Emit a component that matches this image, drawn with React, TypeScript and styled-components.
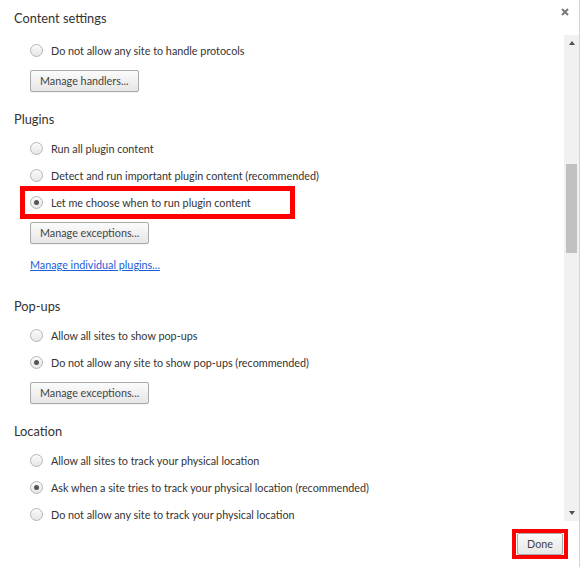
import styled, { createGlobalStyle } from 'styled-components';

const GlobalStyle = createGlobalStyle`
  html, body {
    margin: 0;
    padding: 0;
    background: #fff;
  }
  * {
    box-sizing: border-box;
  }
`;

const Dialog = styled.div`
  width: 580px;
  height: 567px;
  display: flex;
  flex-direction: column;
  background: #fff;
  border-right: 1px solid #d4d4d4;
  font-family: Lato, 'Noto Sans', sans-serif;
  color: #333;
`;

const Header = styled.div`
  height: 35px;
  display: flex;
  align-items: flex-start;
  justify-content: space-between;
  padding: 8px 9px 0 14px;
`;

const Title = styled.h1`
  margin: 0;
  font-size: 12.8px;
  font-weight: 400;
  line-height: 20px;
  color: #333;
`;

const CloseButton = styled.button`
  border: none;
  background: none;
  padding: 0;
  margin-top: -1px;
  width: 10px;
  height: 10px;
  display: flex;
  align-items: center;
  justify-content: center;
  cursor: pointer;
`;

const Body = styled.div`
  flex: 1;
  display: flex;
  min-height: 0;
`;

const Content = styled.div`
  flex: 1;
  overflow: hidden;
  padding: 2px 0 0 14px;
`;

const ScrollTrack = styled.div`
  width: 15px;
  display: flex;
  flex-direction: column;
  align-items: center;
  background: #f1f1f1;
`;

const ScrollArrow = styled.div<{ $down?: boolean }>`
  height: 16px;
  width: 15px;
  display: flex;
  align-items: center;
  justify-content: center;
  &::after {
    content: '';
    border-left: 3.5px solid transparent;
    border-right: 3.5px solid transparent;
    ${({ $down }) => ($down ? 'border-top: 4px solid #505050;' : 'border-bottom: 4px solid #505050;')}
  }
`;

const ScrollThumb = styled.div<{ $offset: number; $size: number }>`
  width: 11px;
  margin-top: ${({ $offset }) => $offset}px;
  height: ${({ $size }) => $size}px;
  background: #c1c1c1;
`;

const ScrollRest = styled.div`
  flex: 1;
`;

const Section = styled.section<{ $gap?: number }>`
  margin-top: ${({ $gap }) => $gap ?? 0}px;
`;

const SectionTitle = styled.h2`
  margin: 0 0 6px;
  font-size: 12.8px;
  font-weight: 400;
  line-height: 20px;
  color: #333;
`;

const Options = styled.div`
  padding-left: 16px;
  display: flex;
  flex-direction: column;
  align-items: flex-start;
`;

const RadioRow = styled.label`
  height: 27px;
  display: flex;
  align-items: center;
  gap: 8px;
  font-size: 10.8px;
  color: #333;
  cursor: pointer;
`;

const Highlight = styled.div`
  width: 275px;
  height: 33px;
  margin: -3px 0 -3px -10px;
  padding-left: 5px;
  border: 5px solid #f00;
  display: flex;
  align-items: center;
`;

const Radio = styled.span<{ $checked?: boolean }>`
  width: 13px;
  height: 13px;
  border-radius: 50%;
  border: 1px solid #b5b5b5;
  background: linear-gradient(#fafafa, #e6e6e6);
  display: flex;
  align-items: center;
  justify-content: center;
  flex-shrink: 0;
  &::after {
    content: '';
    width: 5px;
    height: 5px;
    border-radius: 50%;
    background: #555;
    display: ${({ $checked }) => ($checked ? 'block' : 'none')};
  }
`;

const Button = styled.button<{ $top?: number }>`
  margin-top: ${({ $top }) => $top ?? 6}px;
  height: 22px;
  padding: 0 9px;
  font-family: inherit;
  font-size: 10.8px;
  line-height: 20px;
  color: #444;
  border: 1px solid #aaa;
  border-radius: 2px;
  background: linear-gradient(#fbfbfb, #e6e6e6);
  box-shadow: 0 1px 0 rgba(0, 0, 0, 0.05);
  cursor: pointer;
`;

const Link = styled.a`
  margin-top: 11px;
  font-size: 10.8px;
  line-height: 20px;
  color: #1a5ed8;
  text-decoration: underline;
  cursor: pointer;
`;

const Footer = styled.div`
  height: 46px;
  display: flex;
  align-items: center;
  justify-content: flex-end;
  padding: 0 11px 0 0;
`;

const DoneFrame = styled.div`
  border: 4px solid #f00;
  padding: 0 1px;
  display: flex;
`;

type Option = { label: string; checked?: boolean; highlight?: boolean };

const RadioOption = ({ label, checked, highlight }: Option) => {
  const row = (
    <RadioRow>
      <Radio $checked={checked} />
      {label}
    </RadioRow>
  );
  if (!highlight) return row;
  return <Highlight>{row}</Highlight>;
};

const App = () => {
  return (
    <>
      <GlobalStyle />
      <Dialog>
        <Header>
          <Title>Content settings</Title>
          <CloseButton aria-label="Close">
            <svg width="8" height="8" viewBox="0 0 8 8">
              <path d="M1 1L7 7M7 1L1 7" stroke="#7a7a7a" strokeWidth="2" />
            </svg>
          </CloseButton>
        </Header>
        <Body>
          <Content>
            <Section>
              <Options>
                <RadioOption label="Do not allow any site to handle protocols" />
                <Button>Manage handlers...</Button>
              </Options>
            </Section>

            <Section $gap={17}>
              <SectionTitle>Plugins</SectionTitle>
              <Options>
                <RadioOption label="Run all plugin content" />
                <RadioOption label="Detect and run important plugin content (recommended)" />
                <RadioOption label="Let me choose when to run plugin content" checked highlight />
                <Button>Manage exceptions...</Button>
                <Link>Manage individual plugins...</Link>
              </Options>
            </Section>

            <Section $gap={21}>
              <SectionTitle>Pop-ups</SectionTitle>
              <Options>
                <RadioOption label="Allow all sites to show pop-ups" />
                <RadioOption label="Do not allow any site to show pop-ups (recommended)" checked />
                <Button>Manage exceptions...</Button>
              </Options>
            </Section>

            <Section $gap={17}>
              <SectionTitle>Location</SectionTitle>
              <Options>
                <RadioOption label="Allow all sites to track your physical location" />
                <RadioOption label="Ask when a site tries to track your physical location (recommended)" checked />
                <RadioOption label="Do not allow any site to track your physical location" />
              </Options>
            </Section>
          </Content>
          <ScrollTrack>
            <ScrollArrow />
            <ScrollThumb $offset={113} $size={89} />
            <ScrollRest />
            <ScrollArrow $down />
          </ScrollTrack>
        </Body>
        <Footer>
          <DoneFrame>
            <Button $top={0}>Done</Button>
          </DoneFrame>
        </Footer>
      </Dialog>
    </>
  );
};

export default App;
